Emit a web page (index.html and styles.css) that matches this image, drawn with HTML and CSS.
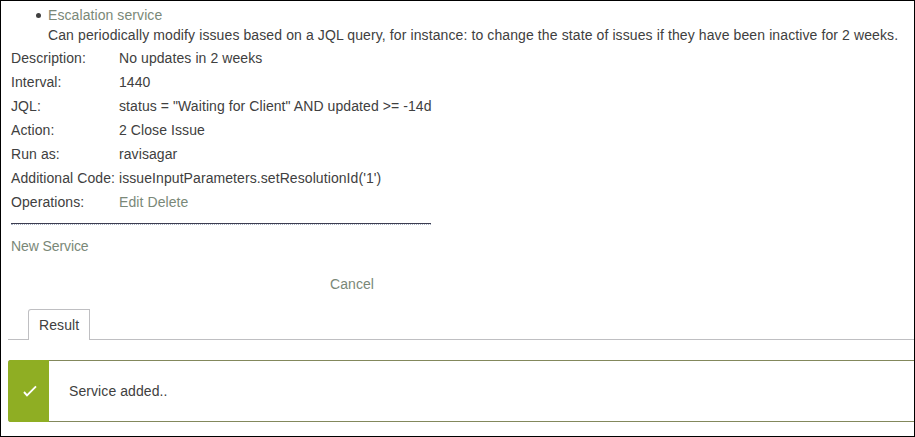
FILE: index.html
```html
<!DOCTYPE html>
<html lang="en">
<head>
<meta charset="utf-8">
<title>Services</title>
<link rel="stylesheet" href="styles.css">
</head>
<body>
<main class="page">
  <ul class="services">
    <li class="service"><a class="link">Escalation service</a>
      <p class="summary">Can periodically modify issues based on a JQL query, for instance: to change the state of issues if they have been inactive for 2 weeks.</p>
    </li>
  </ul>
  <dl class="details">
    <dt>Description:</dt><dd>No updates in 2 weeks</dd>
    <dt>Interval:</dt><dd>1440</dd>
    <dt>JQL:</dt><dd>status = "Waiting for Client" AND updated &gt;= -14d</dd>
    <dt>Action:</dt><dd>2 Close Issue</dd>
    <dt>Run as:</dt><dd>ravisagar</dd>
    <dt>Additional Code:</dt><dd>issueInputParameters.setResolutionId('1')</dd>
    <dt>Operations:</dt><dd><a class="link">Edit</a> <a class="link">Delete</a></dd>
  </dl>
  <hr class="rule">
  <a class="link new-service">New Service</a>
  <a class="link cancel">Cancel</a>
  <div class="tabs"><div class="tab">Result</div></div>
  <div class="message">
    <div class="message-icon">
      <svg width="14" height="12" viewBox="0 0 14 12"><path d="M1 7 L4 10.3 L13 1.3" fill="none" stroke="#fff" stroke-width="1.9"/></svg>
    </div>
    <p class="message-text">Service added..</p>
  </div>
</main>
</body>
</html>
```
FILE: styles.css
```css
* {
  box-sizing: border-box;
}

body {
  margin: 0;
  background: #fff;
  color: #404040;
  font: 14px/20px Arial, "Liberation Sans", sans-serif;
  letter-spacing: 0.08px;
}

p,
ul,
dl,
dd {
  margin: 0;
  padding: 0;
}

.page {
  display: flex;
  flex-direction: column;
  height: 437px;
  padding: 4px 0 0 7px;
  border: 1px solid #000;
  overflow: hidden;
}

.link {
  color: #7a8878;
}

.services {
  padding-left: 40px;
  list-style: none;
  white-space: nowrap;
}

.service::before {
  content: "";
  display: inline-block;
  width: 5px;
  height: 5px;
  margin: 0 7px 0 -12px;
  border-radius: 50%;
  background: #404040;
  vertical-align: 2px;
}

.summary {
  letter-spacing: 0.106px;
}

.details {
  display: grid;
  grid-template-columns: 108px auto;
  grid-auto-rows: 24px;
  margin: 1px 0 0 3px;
  line-height: 24px;
  white-space: nowrap;
}

.rule {
  width: 420px;
  height: 2px;
  margin: 9px 0 0 3px;
  border: 0;
  border-top: 1px solid #3c3d50;
  border-bottom: 1px dotted #aab4c4;
}

.new-service {
  margin: 11px 0 0 3px;
  letter-spacing: -0.1px;
}

.cancel {
  margin: 18px 0 0 322px;
}

.tabs {
  display: flex;
  height: 31px;
  margin-top: 15px;
  padding-left: 20px;
  border-bottom: 1px solid #bfbfc2;
}

.tab {
  width: 62px;
  height: 31px;
  padding: 5px 0 0 10px;
  border: 1px solid #bfbfc2;
  border-bottom: 0;
  border-radius: 3px 0 0 0;
  background: #fff;
}

.message {
  display: flex;
  height: 62px;
  margin-top: 20px;
  border: 1px solid #83885c;
  border-right: 0;
  border-left: 0;
  border-radius: 3px 0 0 3px;
}

.message-icon {
  display: flex;
  align-items: center;
  justify-content: center;
  width: 41px;
  margin: -1px 0;
  padding-left: 2px;
  border-radius: 3px 0 0 3px;
  background: #8fae23;
}

.message-text {
  padding: 20px 0 0 20px;
}
```
